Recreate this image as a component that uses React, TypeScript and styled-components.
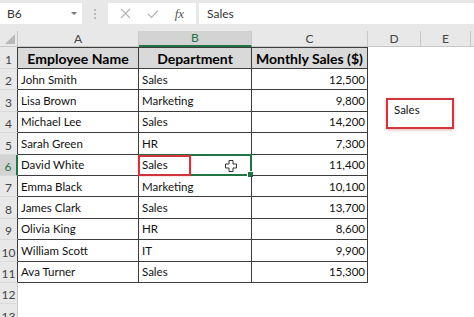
import React from "react";
import styled, { createGlobalStyle, css } from "styled-components";

const GlobalStyle = createGlobalStyle`
  html, body {
    margin: 0;
    padding: 0;
    background: #ffffff;
    overflow: hidden;
  }
  body {
    font-family: Lato, "Liberation Sans", sans-serif;
  }
`;

const GREEN = "#217346";
const RED = "#d1343c";
const TABLE_LINE = "#3c3c3c";

const Wrapper = styled.div`
  width: 474px;
  height: 317px;
  overflow: hidden;
  background: #fff;
`;

const FormulaBar = styled.div`
  display: flex;
  align-items: stretch;
  height: 21px;
  padding: 3px 0 7px 0;
  background: #e8e8e8;
`;

const NameBox = styled.div`
  width: 82px;
  background: #fff;
  display: flex;
  align-items: center;
  justify-content: space-between;
  padding: 0 5px 0 7px;
  box-sizing: border-box;
  font-size: 12px;
  color: #333;
`;

const Caret = styled.span`
  width: 0;
  height: 0;
  border-left: 3px solid transparent;
  border-right: 3px solid transparent;
  border-top: 3px solid #777;
`;

const Grip = styled.div`
  width: 26px;
  display: flex;
  flex-direction: column;
  align-items: center;
  justify-content: center;
  gap: 2px;
  span {
    width: 2px;
    height: 2px;
    background: #a8a8a8;
    border-radius: 1px;
  }
`;

const FxBox = styled.div`
  width: 88px;
  background: #fff;
  display: flex;
  align-items: center;
  justify-content: space-around;
  padding: 0 4px;
  box-sizing: border-box;
`;

const Fx = styled.span`
  font-family: "Liberation Serif", serif;
  font-style: italic;
  font-size: 13px;
  color: #555;
`;

const FormulaInput = styled.div`
  flex: 1;
  margin-left: 3px;
  background: #fff;
  display: flex;
  align-items: center;
  padding-left: 8px;
  font-size: 12px;
  color: #333;
`;

const Sheet = styled.div`
  position: relative;
  display: grid;
  grid-template-columns: 18px 121px 113px 116px 53px 50px 1fr;
  grid-template-rows: 16px 22px repeat(12, 21.4px);
`;

const ColHead = styled.div<{ $active?: boolean }>`
  background: ${(p) => (p.$active ? "#d3d3d3" : "#e8e8e8")};
  color: ${(p) => (p.$active ? GREEN : "#444")};
  border-right: 1px solid #c8c8c8;
  border-bottom: ${(p) => (p.$active ? `2px solid ${GREEN}` : "1px solid #c8c8c8")};
  box-sizing: border-box;
  font-size: 12px;
  display: flex;
  align-items: center;
  justify-content: center;
  line-height: 1;
`;

const Corner = styled.div`
  background: #e8e8e8;
  border-right: 1px solid #c8c8c8;
  border-bottom: 1px solid #c8c8c8;
  box-sizing: border-box;
  position: relative;
  &::after {
    content: "";
    position: absolute;
    right: 2px;
    bottom: 2px;
    width: 0;
    height: 0;
    border-left: 10px solid transparent;
    border-bottom: 10px solid #b9b9b9;
  }
`;

const RowHead = styled.div<{ $active?: boolean; $table?: boolean }>`
  background: ${(p) => (p.$active ? "#d3d3d3" : "#e8e8e8")};
  color: ${(p) => (p.$active ? GREEN : "#444")};
  border-right: ${(p) =>
    p.$active ? `2px solid ${GREEN}` : p.$table ? `1px solid ${TABLE_LINE}` : "1px solid #c8c8c8"};
  border-bottom: 1px solid #dadada;
  box-sizing: border-box;
  font-size: 12px;
  display: flex;
  align-items: flex-end;
  justify-content: center;
  padding-bottom: 2px;
  line-height: 1;
`;

const Cell = styled.div<{ $table?: boolean; $head?: boolean; $num?: boolean }>`
  box-sizing: border-box;
  display: flex;
  align-items: center;
  padding: 0 3px;
  font-size: 11.5px;
  color: #111;
  white-space: nowrap;
  position: relative;
  ${(p) =>
    p.$table &&
    css`
      border-right: 1px solid ${TABLE_LINE};
      border-bottom: 1px solid ${TABLE_LINE};
    `}
  ${(p) =>
    p.$head &&
    css`
      background: #d9d9d9;
      border-top: 1px solid ${TABLE_LINE};
      font-weight: 700;
      font-size: 14px;
      justify-content: center;
      color: #000;
    `}
  ${(p) =>
    p.$num &&
    css`
      justify-content: flex-end;
      padding-right: 2px;
    `}
`;

const Selection = styled.div`
  position: absolute;
  left: -1px;
  top: -1px;
  right: -1px;
  bottom: -1px;
  border: 2px solid ${GREEN};
  pointer-events: none;
  &::after {
    content: "";
    position: absolute;
    right: -4px;
    bottom: -4px;
    width: 5px;
    height: 5px;
    background: ${GREEN};
    border: 1px solid #fff;
  }
`;

const RedMark = styled.div`
  position: absolute;
  left: -1px;
  top: 0px;
  width: 53px;
  height: 21px;
  border: 2px solid ${RED};
  box-sizing: border-box;
  box-shadow: 0 0 2px rgba(209, 52, 60, 0.35);
`;

const Cursor = styled.svg`
  position: absolute;
  left: 86px;
  top: 5px;
`;

const Callout = styled.div`
  position: absolute;
  left: 386px;
  top: 67px;
  width: 68px;
  height: 31px;
  border: 2px solid ${RED};
  box-sizing: border-box;
  box-shadow: 0 1px 3px rgba(160, 40, 40, 0.35);
  background: #fff;
  font-size: 11.5px;
  color: #111;
  padding: 3px 0 0 6px;
`;

type Row = [string, string, string];

const ROWS: Row[] = [
  ["John Smith", "Sales", "12,500"],
  ["Lisa Brown", "Marketing", "9,800"],
  ["Michael Lee", "Sales", "14,200"],
  ["Sarah Green", "HR", "7,300"],
  ["David White", "Sales", "11,400"],
  ["Emma Black", "Marketing", "10,100"],
  ["James Clark", "Sales", "13,700"],
  ["Olivia King", "HR", "8,600"],
  ["William Scott", "IT", "9,900"],
  ["Ava Turner", "Sales", "15,300"],
];

const COLS = ["A", "B", "C", "D", "E"];

function App() {
  return (
    <Wrapper>
      <GlobalStyle />
      <FormulaBar>
        <NameBox>
          B6
          <Caret />
        </NameBox>
        <Grip>
          <span />
          <span />
          <span />
        </Grip>
        <FxBox>
          <svg width="11" height="11" viewBox="0 0 11 11">
            <path d="M1 1 L10 10 M10 1 L1 10" stroke="#b4b4b4" strokeWidth="1.2" />
          </svg>
          <svg width="12" height="10" viewBox="0 0 12 10">
            <path d="M1 5 L4.5 8.5 L11 1.5" stroke="#b4b4b4" strokeWidth="1.2" fill="none" />
          </svg>
          <Fx>fx</Fx>
        </FxBox>
        <FormulaInput>Sales</FormulaInput>
      </FormulaBar>

      <Sheet>
        <Corner />
        {COLS.map((c) => (
          <ColHead key={c} $active={c === "B"}>
            {c}
          </ColHead>
        ))}
        <ColHead />

        <RowHead $table>1</RowHead>
        <Cell $table $head>Employee Name</Cell>
        <Cell $table $head>Department</Cell>
        <Cell $table $head>Monthly Sales ($)</Cell>
        <Cell />
        <Cell />
        <Cell />

        {ROWS.map((r, i) => {
          const n = i + 2;
          const active = n === 6;
          return (
            <React.Fragment key={n}>
              <RowHead $active={active} $table>
                {n}
              </RowHead>
              <Cell $table>{r[0]}</Cell>
              <Cell $table>
                {r[1]}
                {active && (
                  <>
                    <Selection />
                    <RedMark />
                    <Cursor width="12" height="12" viewBox="0 0 12 12">
                      <path
                        d="M4 0.5 H8 V4 H11.5 V8 H8 V11.5 H4 V8 H0.5 V4 H4 Z"
                        fill="#fff"
                        stroke="#333"
                        strokeWidth="1"
                      />
                    </Cursor>
                  </>
                )}
              </Cell>
              <Cell $table $num>
                {r[2]}
              </Cell>
              <Cell />
              <Cell />
              <Cell />
            </React.Fragment>
          );
        })}

        {[12, 13].map((n) => (
          <React.Fragment key={n}>
            <RowHead>{n}</RowHead>
            <Cell />
            <Cell />
            <Cell />
            <Cell />
            <Cell />
            <Cell />
          </React.Fragment>
        ))}

        <Callout>Sales</Callout>
      </Sheet>
    </Wrapper>
  );
}

export default App;
